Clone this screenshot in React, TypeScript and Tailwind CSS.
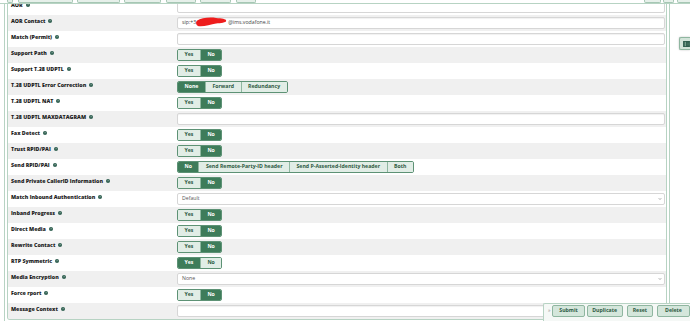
import { ChevronDown } from "lucide-react";

type Control =
  | { kind: "input"; contact?: boolean }
  | { kind: "toggle"; options: string[]; selected: number }
  | { kind: "select"; value: string };

type Row = { label: string; control: Control };

const yesNo = (selected: number): Control => ({ kind: "toggle", options: ["Yes", "No"], selected });

const ROWS: Row[] = [
  { label: "AOR", control: { kind: "input" } },
  { label: "AOR Contact", control: { kind: "input", contact: true } },
  { label: "Match (Permit)", control: { kind: "input" } },
  { label: "Support Path", control: yesNo(1) },
  { label: "Support T.38 UDPTL", control: yesNo(1) },
  {
    label: "T.38 UDPTL Error Correction",
    control: { kind: "toggle", options: ["None", "Forward", "Redundancy"], selected: 0 },
  },
  { label: "T.38 UDPTL NAT", control: yesNo(1) },
  { label: "T.38 UDPTL MAXDATAGRAM", control: { kind: "input" } },
  { label: "Fax Detect", control: yesNo(1) },
  { label: "Trust RPID/PAI", control: yesNo(1) },
  {
    label: "Send RPID/PAI",
    control: {
      kind: "toggle",
      options: ["No", "Send Remote-Party-ID header", "Send P-Asserted-Identity header", "Both"],
      selected: 0,
    },
  },
  { label: "Send Private CallerID Information", control: yesNo(1) },
  { label: "Match Inbound Authentication", control: { kind: "select", value: "Default" } },
  { label: "Inband Progress", control: yesNo(1) },
  { label: "Direct Media", control: yesNo(1) },
  { label: "Rewrite Contact", control: yesNo(1) },
  { label: "RTP Symmetric", control: yesNo(0) },
  { label: "Media Encryption", control: { kind: "select", value: "None" } },
  { label: "Force rport", control: yesNo(1) },
  { label: "Message Context", control: { kind: "input" } },
];

const TABS_LEFT = [
  "ml-[7px] w-[6px]",
  "ml-[5px] w-[55px]",
  "ml-[4px] w-[43px]",
  "ml-[4px] w-[37px]",
  "ml-[5px] w-[30px]",
  "ml-[4px] w-[31px]",
  "ml-[5px] w-[20px]",
];
const TABS_RIGHT = ["w-[17px]", "ml-[2px] w-[11px]", "ml-[3px] w-[16px]"];

function InfoIcon() {
  return (
    <svg viewBox="0 0 8 8" className="ml-[3px] h-[4px] w-[4px] shrink-0">
      <circle cx="4" cy="4" r="4" fill="#2a5b4c" />
      <path d="M3 3.1 C3 2 5 2 5 3.1 C5 3.9 4 3.9 4 4.8" stroke="#cfe3d8" strokeWidth="0.9" fill="none" />
      <circle cx="4" cy="6.1" r="0.5" fill="#cfe3d8" />
    </svg>
  );
}

function TextInput({ contact }: { contact?: boolean }) {
  return (
    <div className="relative flex h-[12px] w-full items-center rounded-[2px] border border-[#d6d6d6] bg-white pl-[4px] text-[5.2px] text-[#444] shadow-[inset_0_1px_1px_rgba(0,0,0,0.06)]">
      {contact && (
        <>
          <span>sip:+3</span>
          <span className="relative inline-block h-[6px] w-[32px]">
            <svg viewBox="0 0 34 12" className="absolute left-[-3px] top-[-3.5px] h-[11px] w-[37px]">
              <path
                d="M1 4 C6 1 14 0 22 1 C28 1.5 33 2 33 4 C33 6 27 6.5 22 7 C16 8 8 11 3 10 C0 9 -0.5 6 1 4 Z"
                fill="#ee1c1c"
              />
            </svg>
          </span>
          <span>@ims.vodafone.it</span>
        </>
      )}
    </div>
  );
}

function Toggle({ options, selected }: { options: string[]; selected: number }) {
  return (
    <div className="flex h-[12px] overflow-hidden rounded-[2px] border border-[#5d9275]">
      {options.map((opt, i) => (
        <div
          key={opt}
          className={
            "flex items-center px-[6.5px] text-[5.2px] font-bold " +
            (i > 0 ? "border-l border-[#8fb7a0] " : "") +
            (i === selected ? "bg-[#3e7c5a] text-white" : "bg-[#e1ede6] text-[#2e5a43]")
          }
        >
          {opt}
        </div>
      ))}
    </div>
  );
}

function Select({ value }: { value: string }) {
  return (
    <div className="flex h-[12px] w-full items-center justify-between rounded-[2px] border border-[#d6d6d6] bg-white pl-[4px] pr-[2px] text-[5.2px] text-[#555]">
      <span>{value}</span>
      <ChevronDown className="h-[4px] w-[4px] text-[#555]" strokeWidth={3} />
    </div>
  );
}

function FormRow({ row, index }: { row: Row; index: number }) {
  const c = row.control;
  return (
    <div className={"flex h-[16px] " + (index % 2 === 1 ? "bg-[#f0f0f0]" : "bg-white")}>
      <div className="flex w-[169px] shrink-0 items-start pl-[3px] pt-[2.5px]">
        <span className="flex items-center text-[5.3px] font-extrabold leading-[6px] text-[#1e1e1e]">
          {row.label}
          <InfoIcon />
        </span>
      </div>
      <div className="flex flex-1 items-center pr-[1px]">
        {c.kind === "input" && <TextInput contact={c.contact} />}
        {c.kind === "toggle" && <Toggle options={c.options} selected={c.selected} />}
        {c.kind === "select" && <Select value={c.value} />}
      </div>
    </div>
  );
}

export default function App() {
  return (
    <div className="relative h-[321px] w-[690px] overflow-hidden bg-white font-['Open_Sans',sans-serif]">
      <div className="-mt-[1px] ml-[4px] w-[666px] border-x border-[#b7d3c3] px-[2px]">
        <div className="overflow-hidden rounded-b-[3px] border-x border-b border-[#b7d3c3]">
          {ROWS.map((row, i) => (
            <FormRow key={row.label} row={row} index={i} />
          ))}
        </div>
        <div className="h-[4px]" />
      </div>

      {/* sticky tab bar, scrolled content runs under it */}
      <div className="absolute left-0 right-0 top-0 flex h-[4px] border-b border-[#b7d3c3] bg-white">
        {TABS_LEFT.map((cls, i) => (
          <div key={i} className={cls + " h-[3px] rounded-b-[2px] border-x border-b border-[#a6c7b4] bg-[#e6f0ea]"} />
        ))}
        <div className="ml-auto mr-[-3px] flex">
          {TABS_RIGHT.map((cls, i) => (
            <div key={i} className={cls + " h-[3px] rounded-b-[2px] border-x border-b border-[#a6c7b4] bg-[#e6f0ea]"} />
          ))}
        </div>
      </div>

      {/* side drawer tab */}
      <div className="absolute right-0 top-[37px] flex h-[13px] w-[11px] items-center justify-end rounded-l-[2px] border border-r-0 border-[#8fb6a0] bg-[#d2e4d9] shadow-[0_0_2px_rgba(0,0,0,0.25)]">
        <svg viewBox="0 0 8 7" className="h-[6px] w-[7px]">
          <rect x="0" y="0" width="8" height="7" fill="#2f5e4e" />
          <rect x="2" y="1" width="1" height="5" fill="#9cc3ae" />
          <rect x="4" y="2" width="4" height="1" fill="#4d7a68" />
          <rect x="4" y="4" width="4" height="1" fill="#4d7a68" />
        </svg>
      </div>

      {/* floating action bar */}
      <div className="absolute bottom-[-2px] left-[543px] right-0 top-[303px] flex items-start rounded-tl-[2px] border-l border-t border-[#b7d3c3] bg-[#f5f8f6] pl-[4px] pt-[1px]">
        <span className="mt-[2px] text-[5px] text-[#888]">»</span>
        <div className="ml-[2px] flex h-[12px] w-[33px] items-center justify-center rounded-[2px] border border-[#8fb6a0] bg-[#d4e6db] text-[5.2px] font-bold text-[#2e5a43]">
          Submit
        </div>
        <div className="ml-[2px] flex h-[12px] w-[37px] items-center justify-center rounded-[2px] border border-[#8fb6a0] bg-[#d4e6db] text-[5.2px] font-bold text-[#2e5a43]">
          Duplicate
        </div>
        <div className="ml-[4px] flex h-[12px] w-[27px] items-center justify-center rounded-[2px] border border-[#8fb6a0] bg-[#d4e6db] text-[5.2px] font-bold text-[#2e5a43]">
          Reset
        </div>
        <div className="ml-[4px] flex h-[12px] w-[33px] shrink-0 items-center justify-center rounded-[2px] border border-[#8fb6a0] bg-[#d4e6db] text-[5.2px] font-bold text-[#2e5a43]">
          Delete
        </div>
      </div>
    </div>
  );
}
